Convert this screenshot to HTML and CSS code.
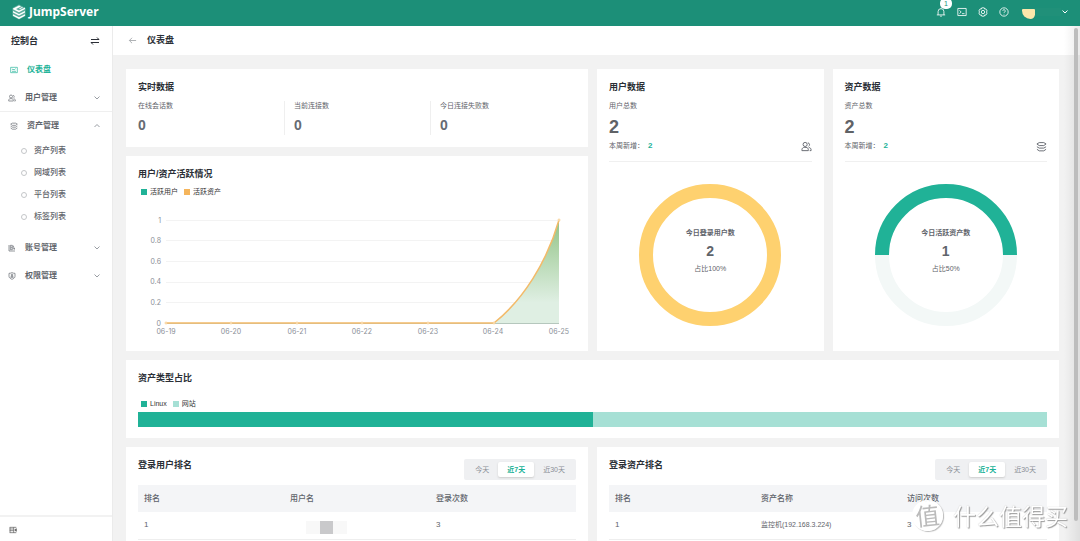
FILE: index.html
```html
<!DOCTYPE html>
<html lang="zh-CN">
<head>
<meta charset="utf-8">
<title>JumpServer</title>
<link rel="stylesheet" href="styles.css">
</head>
<body>
<svg class="sprite" aria-hidden="true">
  <symbol id="down" viewBox="0 0 8 8"><path d="M1.500 2.500 4 5 6.500 2.500"/></symbol>
  <symbol id="up" viewBox="0 0 8 8"><path d="M1.500 5 4 2.500 6.500 5"/></symbol>
  <symbol id="users" viewBox="0 0 24 24"><circle cx="9" cy="7.500" r="4.500"/><path d="M2 21v-2c0-3 2.500-5 5-5h4c3 0 5 2 5 5v2zM15 4a4 4 0 0 1 1.500 7.500M17 14c3 .5 5 2.500 5 5v2h-3"/></symbol>
  <symbol id="layers" viewBox="0 0 24 24"><path d="M7 3.500h10l5 3-5 3.500H7L2 6.500zM2 12.500l5 3h10l5-3M2 18l5 3.500h10l5-3.500"/></symbol>
</svg>
<header class="topbar">
  <a class="brand" href="#">
    <svg class="brand-mark" viewBox="0 0 16 16"><path d="M8 0.500 14.500 4v8L8 15.500 1.500 12V4z" fill="#fff" opacity=".3"/><path d="M2 4.500 8 1.500l2 1-5 2.500 3 1.500 6-3v1.500L8 8.300 2 5.300zM2 7l6 3 6-3v1.600l-6 3-6-3zM2 10.300l6 3 6-3v1.500l-6 3.100-6-3.100zM8 4.500l3-1.500 1 .5-3 1.500z" fill="#fff"/></svg>
    <span>JumpServer</span>
  </a>
  <nav class="tools">
    <button class="tool" aria-label="消息"><svg viewBox="0 0 24 24"><path d="M5 19v-8a7 7 0 0 1 14 0v8M2 19h20M10 22h4M12 2v2"/></svg><span class="badge">1</span></button>
    <button class="tool" aria-label="终端"><svg viewBox="0 0 24 24"><path d="M2 3.500h20v17H2zM6 8l4 4-4 4M12 16h6"/></svg></button>
    <button class="tool" aria-label="设置"><svg viewBox="0 0 24 24"><path d="M9 2h6l1 3 3-.5 3 5-2 2.500 2 2.500-3 5-3-.5-1 3H9l-1-3-3 .5-3-5L4 12 2 9.500l3-5L8 5z"/><circle cx="12" cy="12" r="4"/></svg></button>
    <button class="tool" aria-label="帮助"><svg viewBox="0 0 24 24"><circle cx="12" cy="12" r="10"/><path d="M9 9.500a3 3 0 1 1 4.500 2.600c-1 .6-1.500 1-1.500 2.400M12 16.500v1.500"/></svg></button>
    <button class="account" aria-label="账户"><span class="avatar"></span><span class="account-name"></span><svg class="chev"><use href="#down"/></svg></button>
  </nav>
</header>
<div class="shell">
  <aside class="sidebar">
    <div class="side-title"><h2>控制台</h2><button class="plain" aria-label="切换"><svg class="swap" viewBox="0 0 10 10"><path d="M1 3.500h8L7 1.500M9 6.500H1L3 8.500"/></svg></button></div>
    <nav>
      <a class="item inset active" href="#"><svg class="ico" viewBox="0 0 24 24"><path d="M2 4h20v16H2zM6 11l3-2 3 3 5-4M6 16h12"/></svg><span>仪表盘</span></a>
      <a class="item ruled" href="#"><svg class="ico"><use href="#users"/></svg><span>用户管理</span><svg class="chev"><use href="#down"/></svg></a>
      <a class="item inset" href="#"><svg class="ico"><use href="#layers"/></svg><span>资产管理</span><svg class="chev"><use href="#up"/></svg></a>
      <ul class="sub">
        <li><a href="#">资产列表</a></li>
        <li><a href="#">网域列表</a></li>
        <li><a href="#">平台列表</a></li>
        <li><a href="#">标签列表</a></li>
      </ul>
      <a class="item" href="#"><svg class="ico" viewBox="0 0 24 24"><path d="M3 3v18M3 21h18M7 4v13h6V4zM16 5l3 12M16 14h5M10 8v5"/></svg><span>账号管理</span><svg class="chev"><use href="#down"/></svg></a>
      <a class="item" href="#"><svg class="ico" viewBox="0 0 24 24"><path d="M3 4c4 0 6-1 9-2 3 1 5 2 9 2v9c0 4-4 7-9 9-5-2-9-5-9-9zM8 16c0-5 8-5 8 0z"/><circle cx="12" cy="9" r="2.500"/></svg><span>权限管理</span><svg class="chev"><use href="#down"/></svg></a>
    </nav>
    <div class="side-foot"><button class="plain" aria-label="收起菜单"><svg class="ico fold" viewBox="0 0 24 24"><path d="M2 4h20M2 9h12M2 14h12M2 20h20M3 4v16M14 4v16"/><path d="M22 8v8l-5-4z" fill="currentColor"/></svg></button></div>
  </aside>
  <main class="main">
    <div class="page-head"><button class="plain" aria-label="返回"><svg class="back" viewBox="0 0 10 10"><path d="M9 5H1.500M4.500 2l-3 3 3 3"/></svg></button><h1>仪表盘</h1></div>
    <div class="board">
      <section class="card half">
        <h3>实时数据</h3>
        <div class="stats">
          <div class="stat"><span>在线会话数</span><b>0</b></div>
          <div class="stat"><span>当前连接数</span><b>0</b></div>
          <div class="stat"><span>今日连接失败数</span><b>0</b></div>
        </div>
      </section>
      <section class="card tall">
        <h3>用户数据</h3>
        <p class="label">用户总数</p>
        <p class="total">2</p>
        <div class="week"><span>本周新增：</span><em>2</em><svg class="week-ico"><use href="#users"/></svg></div>
        <div class="donut">
          <svg viewBox="0 0 142 142"><circle cx="71" cy="71" r="64" stroke="#fed16f"/></svg>
          <div class="donut-text"><strong>今日登录用户数</strong><b>2</b><span>占比100%</span></div>
        </div>
      </section>
      <section class="card tall">
        <h3>资产数据</h3>
        <p class="label">资产总数</p>
        <p class="total">2</p>
        <div class="week"><span>本周新增：</span><em>2</em><svg class="week-ico"><use href="#layers"/></svg></div>
        <div class="donut">
          <svg viewBox="0 0 142 142"><circle cx="71" cy="71" r="64" stroke="#f3f8f7"/><path d="M7 71a64 64 0 0 1 128 0" stroke="#20b297"/></svg>
          <div class="donut-text"><strong>今日活跃资产数</strong><b>1</b><span>占比50%</span></div>
        </div>
      </section>
      <section class="card half">
        <h3>用户/资产活跃情况</h3>
        <ul class="legend"><li class="green">活跃用户</li><li class="orange">活跃资产</li></ul>
        <svg class="chart" viewBox="0 0 438 139">
          <defs><linearGradient id="area" x1="0" y1="0" x2="0" y2="1"><stop offset="0" stop-color="#93c487"/><stop offset=".8" stop-color="#dfefe3"/><stop offset="1" stop-color="#dfefe3"/></linearGradient></defs>
          <path class="grid" d="M28 20.500H421M28 40.500H421M28 61.500H421M28 82.500H421M28 102.500H421"/>
          <path class="base" d="M28 123.500H421"/>
          <path d="M356 123C385 100 409 62 421 20V123z" fill="url(#area)"/>
          <path class="line" d="M28 123H356C385 100 409 62 421 20"/>
          <g class="dots"><circle cx="28" cy="123" r="1"/><circle cx="93" cy="123" r="1"/><circle cx="159" cy="123" r="1"/><circle cx="224" cy="123" r="1"/><circle cx="290" cy="123" r="1"/><circle cx="356" cy="123" r="1"/><circle cx="421" cy="20" r="1"/></g>
          <g class="ylab"><text x="23" y="23">1</text><text x="23" y="43">0.8</text><text x="23" y="64">0.6</text><text x="23" y="84">0.4</text><text x="23" y="105">0.2</text><text x="23" y="126">0</text></g>
          <g class="xlab"><text x="28" y="134">06-19</text><text x="93" y="134">06-20</text><text x="159" y="134">06-21</text><text x="224" y="134">06-22</text><text x="290" y="134">06-23</text><text x="355" y="134">06-24</text><text x="421" y="134">06-25</text></g>
        </svg>
      </section>
      <section class="card full">
        <h3>资产类型占比</h3>
        <ul class="legend spaced"><li class="green">Linux</li><li class="mint">网站</li></ul>
        <div class="ratio"><div class="ratio-fill" style="width:50%"></div></div>
      </section>
      <section class="card half rank">
        <div class="rank-head"><h3>登录用户排名</h3><div class="tabs"><button>今天</button><button class="on">近7天</button><button>近30天</button></div></div>
        <table>
          <thead><tr><th>排名</th><th>用户名</th><th>登录次数</th></tr></thead>
          <tbody><tr><td>1</td><td><span class="mask"><i></i><i></i><i></i></span></td><td>3</td></tr></tbody>
        </table>
      </section>
      <section class="card half rank">
        <div class="rank-head"><h3>登录资产排名</h3><div class="tabs"><button>今天</button><button class="on">近7天</button><button>近30天</button></div></div>
        <table>
          <thead><tr><th>排名</th><th>资产名称</th><th>访问次数</th></tr></thead>
          <tbody><tr><td>1</td><td class="asset">监控机(192.168.3.224)</td><td>3</td></tr></tbody>
        </table>
      </section>
    </div>
    <div class="scroll-edge"><div class="thumb"></div></div>
  </main>
</div>
<div class="watermark"><span class="seal">值</span><span>什么值得买</span></div>
</body>
</html>
```
FILE: styles.css
```css
* { box-sizing: border-box; margin: 0; padding: 0; }
html, body { height: 100%; overflow: hidden; }
body {
  display: flex;
  flex-direction: column;
  background: #f2f2f2;
  color: #5f646b;
  font-family: "Liberation Sans", "Noto Sans CJK SC", sans-serif;
  font-size: 8px;
  line-height: 10px;
}
ul { list-style: none; }
a { color: inherit; text-decoration: none; }
button { border: 0; background: none; color: inherit; font: inherit; cursor: pointer; }
svg { display: block; fill: none; stroke: currentColor; }
h1, h2, h3 { font-size: 9px; line-height: 13px; font-weight: 600; color: #2b2f36; }
.sprite { position: absolute; width: 0; height: 0; }

.topbar {
  flex: none;
  display: flex;
  justify-content: space-between;
  height: 26px;
  padding: 0 11px;
  background: #1c8f78;
  color: #fff;
}
.brand { display: flex; align-items: center; gap: 2px; font: 700 12px/24px "Noto Sans", sans-serif; height: 24px; }
.brand-mark { width: 16px; height: 16px; stroke: none; }
.tools { display: flex; align-items: center; gap: 11px; height: 24px; }
.tool { position: relative; width: 10px; height: 10px; }
.tool svg { width: 10px; height: 10px; stroke-width: 2; }
.badge {
  position: absolute;
  left: 4px;
  top: -9px;
  width: 12px;
  height: 11px;
  border-radius: 5px;
  background: #fff;
  color: #1c8f78;
  font-size: 7px;
  line-height: 11px;
}
.account { display: flex; align-items: center; margin-left: 2px; }
.avatar { width: 13px; height: 10px; background: #fde7ab; border-radius: 1px 1px 5px 9px; margin-top: 4px; }
.account-name { width: 26px; height: 8px; background: #209079; }
.chev { width: 8px; height: 8px; stroke-width: 1; }

.shell { flex: 1; display: flex; min-height: 0; }
.sidebar {
  flex: none;
  width: 113px;
  display: flex;
  flex-direction: column;
  background: #fff;
  border-right: 1px solid #ebebeb;
}
.side-title { display: flex; align-items: center; justify-content: space-between; height: 30px; padding: 0 12px 0 11px; }
.swap { width: 10px; height: 10px; color: #2b2f36; }
.item { display: flex; align-items: center; height: 28px; padding: 0 11px 0 8px; font-weight: 600; }
.item.inset { padding-left: 10px; }
.item.ruled { border-bottom: 1px solid #efefef; }
.item.active { color: #20b297; }
.item .chev { margin-left: auto; color: #999da3; }
.ico { width: 8px; height: 8px; margin-right: 9px; stroke-width: 2; }
.sub { padding-bottom: 6px; }
.sub a { display: flex; align-items: center; gap: 7px; height: 22px; padding-left: 21px; font-weight: 500; }
.sub a::before { content: ""; width: 4px; height: 4px; border: 1px solid #c4c6c9; border-radius: 50%; }
.side-foot { margin-top: auto; height: 26px; padding: 9px; border-top: 2px solid #f2f2f2; }
.fold { color: #555; }

.main { position: relative; flex: 1; min-width: 0; overflow: hidden; }
.page-head { display: flex; align-items: center; gap: 10px; height: 29px; padding-left: 15px; background: #fff; }
.back { width: 9px; height: 9px; color: #a6a9ad; }
.board {
  display: grid;
  grid-template-columns: repeat(4, minmax(0, 1fr));
  gap: 9px;
  padding: 14px 21px 14px 13px;
}
.card { padding: 12px; background: #fff; }
.half { grid-column: span 2; }
.tall { grid-row: span 2; }
.full { grid-column: 1 / -1; }

.stats { display: grid; grid-template-columns: repeat(3, 1fr); margin-top: 7px; }
.stat { height: 34px; font-size: 7px; }
.stat + .stat { padding-left: 9px; border-left: 1px solid #efefef; }
.stat span, .stat b { display: block; }
.stat b { margin-top: 4px; font-size: 14px; line-height: 20px; color: #666b73; }

.label { margin-top: 7px; font-size: 7px; }
.total { margin-top: 6px; font-size: 18px; line-height: 20px; font-weight: 700; color: #606266; }
.week { display: flex; align-items: center; margin-top: 4px; padding-bottom: 10px; border-bottom: 1px solid #f0f0f0; height: 21px; font-size: 7px; }
.week em { margin-left: 4px; color: #20b297; font-style: normal; font-weight: 700; font-size: 8px; }
.week-ico { width: 11px; height: 11px; margin-left: auto; stroke-width: 2; }
.donut { display: grid; place-items: center; margin: 22px 0 13px; }
.donut > * { grid-area: 1 / 1; }
.donut svg { width: 142px; height: 142px; stroke-width: 14; }
.donut-text { display: flex; flex-direction: column; align-items: center; margin-bottom: 8px; font-size: 7px; }
.donut-text b { margin: 4px 0; font-size: 14px; line-height: 18px; }

.legend { display: flex; gap: 6px; margin: 6px 0 3px 3px; font-size: 7px; color: #333; }
.legend.spaced { margin-top: 14px; }
.legend li { display: flex; align-items: center; gap: 3px; }
.legend li::before { content: ""; width: 6px; height: 6px; background: currentColor; }
.legend .green::before { background: #20b297; }
.legend .orange::before { background: #f5b55c; }
.legend .mint::before { background: #a6e0d5; }
.chart { width: 100%; height: auto; font: 7px Inter, sans-serif; }
.chart text { fill: #8b8f98; stroke: none; }
.ylab { text-anchor: end; }
.xlab { text-anchor: middle; }
.grid { stroke: #f3f3f3; }
.base { stroke: #b5c7bd; }
.chart path[fill] { stroke: none; }
.line { stroke: #f3ba69; stroke-width: 1.5; }
.dots { fill: #fff; stroke: #f8cf92; stroke-width: 1; }
.ratio { height: 15px; background: #a6e0d5; }
.ratio-fill { height: 100%; background: #20b297; }
.full { padding-bottom: 11px; }

.rank-head { display: flex; justify-content: space-between; margin-bottom: 5px; }
.tabs { display: flex; padding: 3px 2px; border-radius: 2px; background: #eff0f2; }
.tabs button { height: 15px; padding: 0 9px; font-size: 7px; line-height: 15px; color: #8b8f96; }
.tabs .on { background: #fff; color: #20b297; font-weight: 600; border-radius: 2px; box-shadow: 0 1px 2px #ccc; }
table { width: 100%; table-layout: fixed; border-collapse: collapse; }
th, td { height: 27px; padding: 0 6px; text-align: left; font-size: 8px; }
th { background: #f4f5f7; font-weight: 500; }
td { border-bottom: 1px solid #eee; }
.asset { font-size: 7px; }
.mask { display: flex; width: 41px; height: 13px; margin: 5px 0 0 16px; }
.mask i { flex: 1; background: #f8f8f8; }
.mask i:nth-child(2) { background: #c9c9cb; }

.scroll-edge {
  position: absolute;
  inset: 0 0 0 auto;
  width: 16px;
  padding: 2px 2px 20px 10px;
  background: linear-gradient(90deg, #0000, #00000014);
}
.thumb { height: 100%; border-radius: 2px; background: #bdbdbd; }
.watermark {
  position: fixed;
  right: 12px;
  bottom: 10px;
  display: flex;
  align-items: center;
  gap: 10px;
  color: #fff;
  font: 23px/32px "Noto Sans CJK SC", sans-serif;
  text-shadow: 1px 1px 1px #999, 0 0 1px #bbb;
}
.seal {
  width: 31px;
  height: 31px;
  border-radius: 50%;
  background: #fffffff0;
  color: #bbb;
  font-size: 24px;
  line-height: 30px;
  text-align: center;
  text-shadow: none;
  box-shadow: 1px 1px 1px #bbb;
  transform: rotate(-6deg);
}
```
